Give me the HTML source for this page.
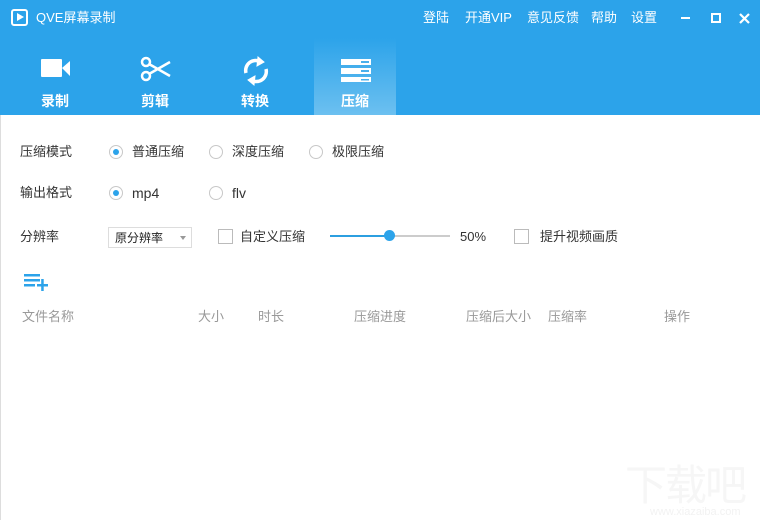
<!DOCTYPE html>
<html><head><meta charset="utf-8"><style>
*{margin:0;padding:0;box-sizing:border-box}
body{width:760px;height:520px;overflow:hidden;background:#fff;font-family:"Liberation Sans","Noto Sans CJK SC",sans-serif;position:relative;line-height:1}
.hdr{position:absolute;left:0;top:0;width:760px;height:115px;background:#2ca3ea}
.t{position:absolute;color:#fff;font-size:13px;white-space:nowrap}
.tab{position:absolute;top:38px;width:82px;height:77px;text-align:center;color:#fff;font-size:14px;font-weight:bold}
.tab span{position:absolute;left:0;right:0;top:56px}
.tab svg{position:absolute;left:25px;top:18px}
.act{background:linear-gradient(#2ca3ea,#6cc0f0)}
.l{position:absolute;font-size:13px;color:#333;white-space:nowrap}
.r{position:absolute;width:14px;height:14px;border:1px solid #c8c8c8;border-radius:50%}
.r.on::after{content:"";position:absolute;left:3px;top:3px;width:6px;height:6px;border-radius:50%;background:#2ca3ea}
.cb{position:absolute;width:15px;height:15px;border:1px solid #bbb}
.h{position:absolute;top:310px;font-size:13px;color:#999;white-space:nowrap}
</style></head><body>
<div class="hdr"></div>
<div style="position:absolute;left:11px;top:9px;width:17px;height:17px;border:2px solid #fff;border-radius:3px"></div>
<div style="position:absolute;left:17px;top:13px;width:0;height:0;border-left:7px solid #fff;border-top:4.5px solid transparent;border-bottom:4.5px solid transparent"></div>
<div class="t" style="left:36px;top:11px">QVE屏幕录制</div>
<div class="t" style="left:423px;top:11px">登陆</div>
<div class="t" style="left:465px;top:11px">开通VIP</div>
<div class="t" style="left:527px;top:11px">意见反馈</div>
<div class="t" style="left:591px;top:11px">帮助</div>
<div class="t" style="left:631px;top:11px">设置</div>
<div style="position:absolute;left:681px;top:17px;width:9px;height:2px;background:#fff"></div>
<div style="position:absolute;left:711px;top:13px;width:10px;height:10px;border:2px solid #fff"></div>
<svg style="position:absolute;left:739px;top:13px" width="11" height="11" stroke="#fff" stroke-width="2.2"><path d="M1 1 L10 10 M10 1 L1 10"/></svg>

<div class="tab" style="left:14px"><svg width="34" height="26"><rect x="2" y="3" width="21" height="18" fill="#fff" rx="1"/><path d="M23 12 L31 5 V20 Z" fill="#fff"/></svg><span>录制</span></div>
<div class="tab" style="left:114px"><svg width="34" height="26" fill="none" stroke="#fff" stroke-width="2.5"><circle cx="7" cy="6" r="4"/><circle cx="7" cy="20" r="4"/><path d="M10 8 L31 20 M10 18 L31 6"/></svg><span>剪辑</span></div>
<div class="tab" style="left:214px"><svg width="34" height="30" fill="none" stroke="#fff" stroke-width="3.5"><path d="M7 17 A10 10 0 0 1 22 6"/><path d="M27 13 A10 10 0 0 1 12 24"/><path d="M19 1 L25 6 L18 10 Z M15 29 L9 24 L16 20 Z" fill="#fff" stroke-width="1"/></svg><span>转换</span></div>
<div class="tab act" style="left:314px"><svg width="34" height="26"><rect x="2" y="3" width="30" height="6" fill="#fff"/><rect x="2" y="12" width="30" height="6" fill="#fff"/><rect x="2" y="21" width="30" height="5" fill="#fff"/><rect x="22" y="5" width="8" height="2" fill="#4bb0ec"/><rect x="22" y="14" width="8" height="2" fill="#4bb0ec"/><rect x="22" y="23" width="8" height="1.5" fill="#4bb0ec"/></svg><span>压缩</span></div>

<div style="position:absolute;left:0;top:115px;width:1px;height:405px;background:#ddd"></div>

<div class="l" style="left:20px;top:145px">压缩模式</div>
<div class="r on" style="left:109px;top:145px"></div><div class="l" style="left:132px;top:145px">普通压缩</div>
<div class="r" style="left:209px;top:145px"></div><div class="l" style="left:232px;top:145px">深度压缩</div>
<div class="r" style="left:309px;top:145px"></div><div class="l" style="left:332px;top:145px">极限压缩</div>

<div class="l" style="left:20px;top:186px">输出格式</div>
<div class="r on" style="left:109px;top:186px"></div><div class="l" style="left:132px;top:186px;font-size:14px">mp4</div>
<div class="r" style="left:209px;top:186px"></div><div class="l" style="left:232px;top:186px;font-size:14px">flv</div>

<div class="l" style="left:20px;top:230px">分辨率</div>
<div style="position:absolute;left:108px;top:227px;width:84px;height:21px;border:1px solid #ddd"></div>
<div class="l" style="left:115px;top:232px;font-size:12px;color:#222">原分辨率</div>
<div style="position:absolute;left:180px;top:236px;border-top:4px solid #999;border-left:3px solid transparent;border-right:3px solid transparent"></div>
<div class="cb" style="left:218px;top:229px"></div><div class="l" style="left:240px;top:230px">自定义压缩</div>
<div style="position:absolute;left:330px;top:235px;width:60px;height:2px;background:#2c9fe0"></div>
<div style="position:absolute;left:390px;top:235px;width:60px;height:2px;background:#ccc"></div>
<div style="position:absolute;left:384px;top:230px;width:11px;height:11px;border-radius:50%;background:#2ca3ea"></div>
<div class="l" style="left:460px;top:230px">50%</div>
<div class="cb" style="left:514px;top:229px"></div><div class="l" style="left:540px;top:230px">提升视频画质</div>

<svg style="position:absolute;left:23px;top:273px" width="27" height="18" fill="#2ca3ea"><rect x="1" y="1" width="16" height="2.5"/><rect x="1" y="6" width="16" height="2.5"/><rect x="1" y="11" width="11" height="2.5"/><rect x="14" y="11" width="11" height="2.5"/><rect x="18.2" y="6" width="2.5" height="12"/></svg>

<div class="h" style="left:22px">文件名称</div>
<div class="h" style="left:198px">大小</div>
<div class="h" style="left:258px">时长</div>
<div class="h" style="left:354px">压缩进度</div>
<div class="h" style="left:466px">压缩后大小</div>
<div class="h" style="left:548px">压缩率</div>
<div class="h" style="left:664px">操作</div>

<div style="position:absolute;left:625px;top:465px;font-size:42px;color:#f6f6f6;letter-spacing:-2px">下载吧</div>
<div style="position:absolute;left:650px;top:507px;font-size:11px;color:#f2f2f2">www.xiazaiba.com</div>
</body></html>
